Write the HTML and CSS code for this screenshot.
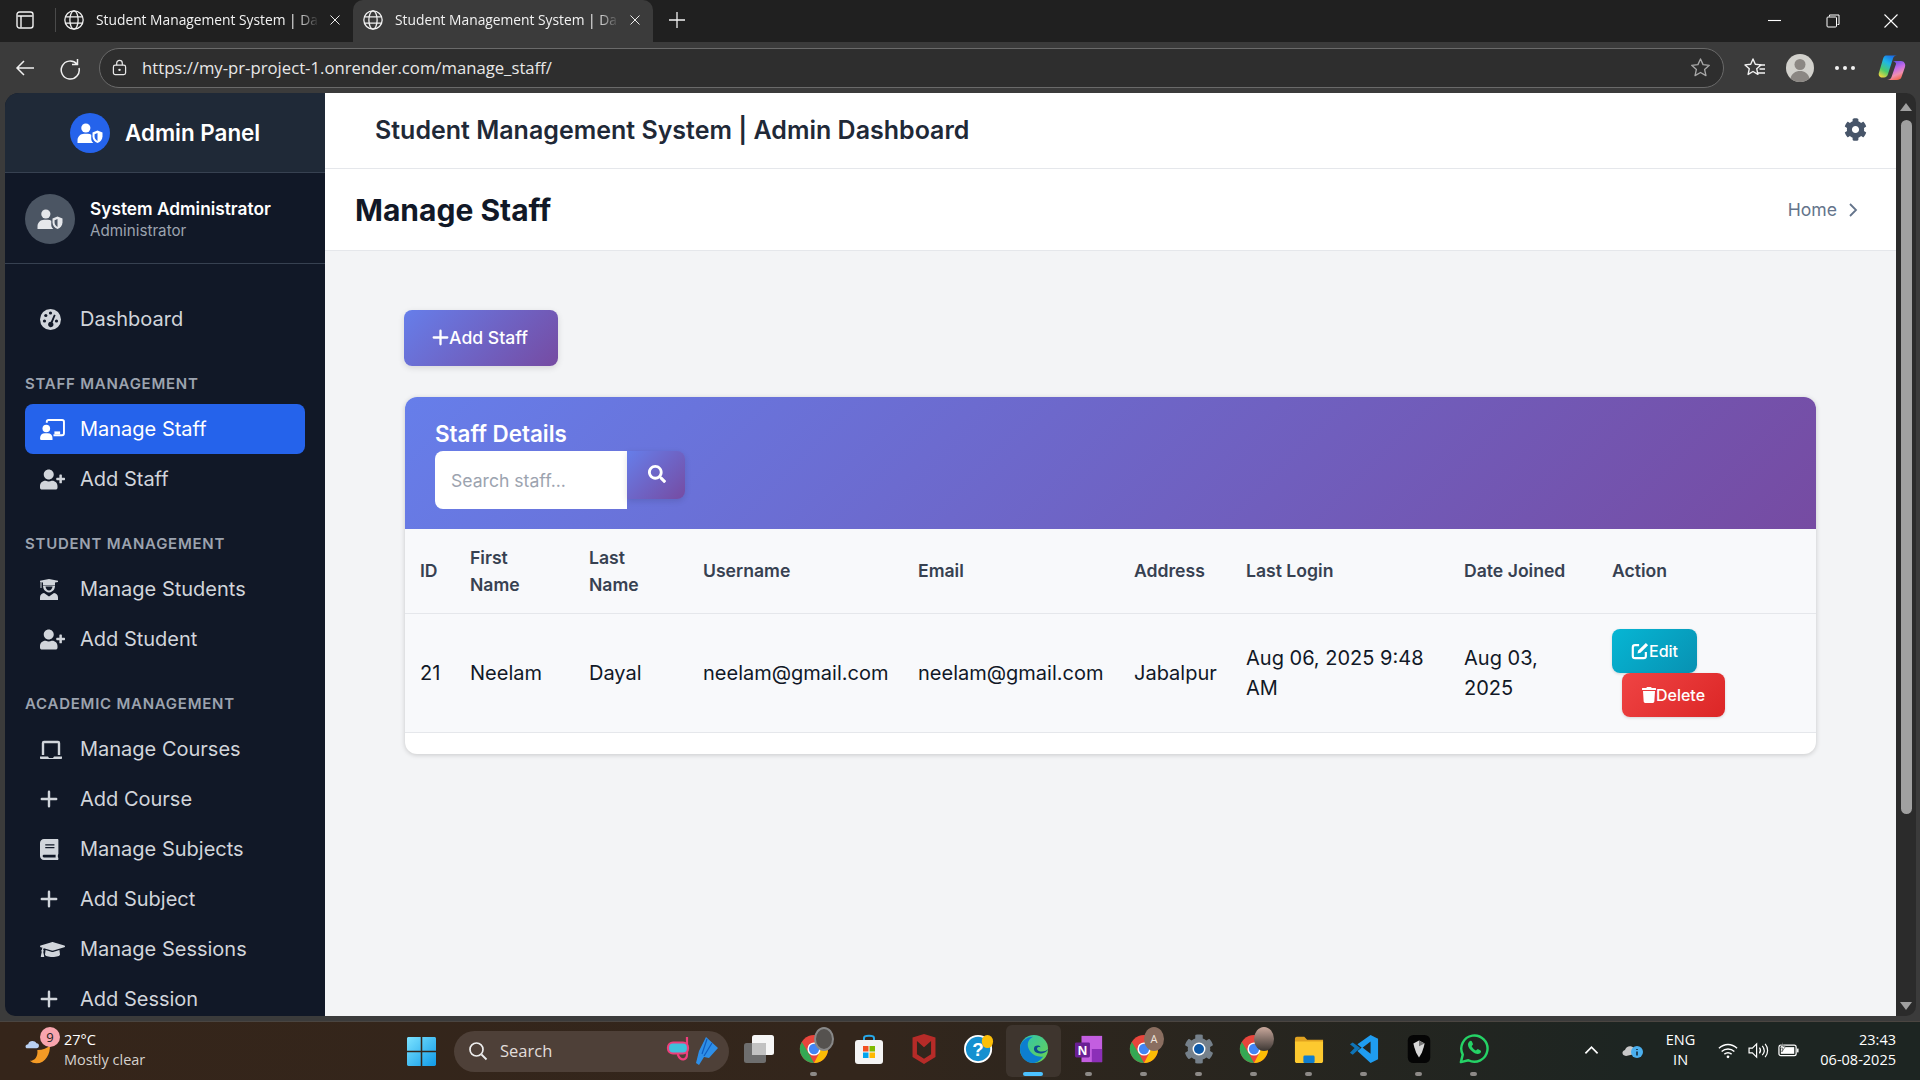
FILE: index.html
```html
<!DOCTYPE html>
<html lang="en">
<head>
	<meta charset="UTF-8">
	<title>Student Management System | Dashboard</title>
	<link rel="stylesheet" href="styles.css">
</head>
<body>
	<svg class="defs" width="0" height="0">
		<defs>
			<symbol id="i-globe" viewBox="0 0 24 24"><g fill="none" stroke="currentColor" stroke-width="1.4"><circle cx="12" cy="12" r="10"/><ellipse cx="12" cy="12" rx="4.5" ry="10"/><path d="M2.5 8.5h19M2.5 15.5h19"/></g></symbol>
			<symbol id="i-x" viewBox="0 0 16 16"><path d="M2 2l12 12M14 2L2 14" fill="none" stroke="currentColor" stroke-width="1.3"/></symbol>
			<symbol id="i-useradd" viewBox="0 0 640 512"><path fill="currentColor" d="M624 208h-64v-64c0-8.8-7.2-16-16-16h-32c-8.8 0-16 7.2-16 16v64h-64c-8.8 0-16 7.2-16 16v32c0 8.8 7.2 16 16 16h64v64c0 8.8 7.2 16 16 16h32c8.8 0 16-7.2 16-16v-64h64c8.8 0 16-7.2 16-16v-32c0-8.8-7.2-16-16-16zm-400 48c70.7 0 128-57.3 128-128S294.7 0 224 0 96 57.3 96 128s57.3 128 128 128zm89.6 32h-16.7c-22.2 10.2-46.9 16-72.9 16s-50.6-5.8-72.9-16h-16.7C60.2 288 0 348.2 0 422.4V464c0 26.5 21.5 48 48 48h352c26.5 0 48-21.5 48-48v-41.6c0-74.2-60.2-134.4-134.4-134.4z"/></symbol>
			<symbol id="i-plus" viewBox="0 0 20 20"><path d="M10 2v16M2 10h16" fill="none" stroke="currentColor" stroke-width="2.7" stroke-linecap="round"/></symbol>
			<symbol id="i-shield" viewBox="0 0 30 24"><circle cx="10" cy="6" r="5.5" fill="currentColor"/><path fill="currentColor" d="M0 24v-3c0-4.500 3.500-8 8-8h4.500c1.500 0 2.800.4 4 1v5c0 2 .8 3.800 2.500 5z"/><path fill="currentColor" d="M24 9l6 2.500v4.500c0 4-2.500 6.800-6 8-3.500-1.200-6-4-6-8v-4.500z"/><path fill="var(--hole)" d="M24 12v9.500c-2.200-1-3.500-3-3.500-5.500v-2.500z"/></symbol>
			<symbol id="i-search" viewBox="0 0 512 512"><path fill="currentColor" d="M505 442.7L405.3 343c-4.5-4.5-10.6-7-17-7H372c27.6-35.3 44-79.7 44-128C416 93.1 322.9 0 208 0S0 93.1 0 208s93.1 208 208 208c48.3 0 92.7-16.4 128-44v16.3c0 6.4 2.5 12.5 7 17l99.7 99.7c9.4 9.4 24.6 9.4 33.9 0l28.3-28.3c9.4-9.4 9.4-24.6.1-34zM208 336c-70.7 0-128-57.2-128-128 0-70.7 57.2-128 128-128 70.7 0 128 57.2 128 128 0 70.7-57.2 128-128 128z"/></symbol>
			<symbol id="i-chrome" viewBox="0 0 32 32"><circle cx="16" cy="16" r="15" fill="#e8453c"/><path fill="#34a853" d="M16 31A15 15 0 0 1 3 8.500L10 20l6 11z"/><path fill="#fbbc05" d="M16 31c8.300 0 15-6.700 15-15 0-2.600-.7-5.200-2-7.500H16l6 11z"/><circle cx="16" cy="16" r="7" fill="#fff"/><circle cx="16" cy="16" r="5.500" fill="#4285f4"/></symbol>
		</defs>
	</svg>

	<div class="tabstrip">
		<svg class="tab-panel-icon" viewBox="0 0 18 18"><rect x="1" y="1" width="16" height="16" rx="2.5" fill="none" stroke="#f2f2f2" stroke-width="1.4"/><path d="M1.500 5h15M5 5v11.500" fill="none" stroke="#f2f2f2" stroke-width="1.4"/></svg>
		<span class="tab-sep"></span>
		<div class="tab">
			<svg class="tab-globe"><use href="#i-globe"/></svg>
			<span class="tab-title">Student Management System | Da</span>
			<svg class="tab-close"><use href="#i-x"/></svg>
		</div>
		<div class="tab tab-active">
			<svg class="tab-globe"><use href="#i-globe"/></svg>
			<span class="tab-title">Student Management System | Da</span>
			<svg class="tab-close"><use href="#i-x"/></svg>
		</div>
		<svg class="tab-new" viewBox="0 0 18 18"><path d="M9 1v16M1 9h16" stroke="#f2f2f2" stroke-width="1.3" fill="none"/></svg>
		<div class="win-controls">
			<svg viewBox="0 0 14 14"><path d="M0 6.500h13" stroke="#fff" stroke-width="1.100"/></svg>
			<svg viewBox="0 0 14 14"><path d="M3.500 2.500V1h9.500v9.500h-1.500" fill="none" stroke="#fff"/><rect x="1" y="3" width="9.500" height="10" rx="1" fill="none" stroke="#fff"/></svg>
			<svg viewBox="0 0 14 14"><path d="M.5.500l13 13M13.500.500l-13 13" stroke="#fff" stroke-width="1.100"/></svg>
		</div>
	</div>

	<div class="toolbar">
		<svg class="tool-icon" viewBox="0 0 24 24"><path d="M21 12H4M11 5l-7 7 7 7" fill="none" stroke="#f0f0f0" stroke-width="1.500"/></svg>
		<svg class="tool-icon" viewBox="0 0 24 24"><path d="M19.500 3v5.500H14M18.900 8A9 9 0 1 0 21 12" fill="none" stroke="#f0f0f0" stroke-width="1.500"/></svg>
		<div class="addressbar">
			<svg class="lock" viewBox="0 0 16 18"><rect x="1.500" y="6.500" width="13" height="10" rx="2" fill="none" stroke="#e8e8e8" stroke-width="1.300"/><path d="M5 6.500V4.500a3 3 0 0 1 6 0v2" fill="none" stroke="#e8e8e8" stroke-width="1.300"/><circle cx="8" cy="11.500" r="1.300" fill="#e8e8e8"/></svg>
			<span class="url">https://my-pr-project-1.onrender.com/manage_staff/</span>
			<svg class="star" viewBox="0 0 22 22"><path d="M11 2l2.700 6 6.500.7-4.900 4.300 1.400 6.500L11 16.200l-5.700 3.300 1.400-6.500L1.800 8.700 8.300 8z" fill="none" stroke="#a8a8a8" stroke-width="1.400" stroke-linejoin="round"/></svg>
		</div>
		<svg class="fav-icon" viewBox="0 0 22 22"><path d="M9 2l2.300 5.300 5.700.6-4.300 3.800 1.200 5.700L9 14.500l-4.900 2.900 1.200-5.700L1 7.900l5.700-.6z" fill="none" stroke="#f2f2f2" stroke-width="1.400" stroke-linejoin="round"/><path d="M15 8h6M15.500 12h5.500M14 16h7" stroke="#f2f2f2" stroke-width="1.300"/></svg>
		<svg class="profile" viewBox="0 0 28 28"><circle cx="14" cy="14" r="14" fill="#d2d1cc"/><circle cx="14" cy="10.500" r="5.500" fill="#8b8783"/><path d="M4.500 24.500c1-5 5-7.500 9.500-7.500s8.500 2.500 9.500 7.500A14 14 0 0 1 14 28a14 14 0 0 1-9.500-3.500z" fill="#8b8783"/></svg>
		<span class="more"><i></i><i></i><i></i></span>
		<svg class="copilot" viewBox="0 0 28 28">
			<defs>
				<linearGradient id="cp1" x1=".7" y1="0" x2=".2" y2="1"><stop offset="0" stop-color="#1a6fe8"/><stop offset=".35" stop-color="#1fb6e6"/><stop offset=".7" stop-color="#4ccb6a"/><stop offset="1" stop-color="#ecd640"/></linearGradient>
				<linearGradient id="cp2" x1=".3" y1="0" x2=".7" y2="1"><stop offset="0" stop-color="#5b4fe6"/><stop offset=".4" stop-color="#c46ae8"/><stop offset=".7" stop-color="#f08fb0"/><stop offset="1" stop-color="#f4603c"/></linearGradient>
			</defs>
			<path fill="url(#cp2)" d="M14 7h9c3 0 5 3 4 6l-3.500 10c-.7 2.200-2.500 3-4.500 3H9c2 0 4-1 4.500-3L18 10c.4-1.500-2-3-4-3z"/>
			<path fill="url(#cp1)" d="M8 1.500h11c-2 0-3.500 1-4 3L10 20c-.5 2-2 3.500-4 3.500H4c-2.500 0-4-2.500-3-5L5 5c.7-2 1.500-3.500 3-3.500z"/>
		</svg>
	</div>

	<div class="viewport">
		<aside class="sidebar">
			<div class="brand">
				<span class="brand-logo"><svg><use href="#i-shield"/></svg></span>
				<span class="brand-name">Admin Panel</span>
			</div>
			<div class="user-box">
				<span class="user-avatar"><svg><use href="#i-shield"/></svg></span>
				<div>
					<div class="user-name">System Administrator</div>
					<div class="user-role">Administrator</div>
				</div>
			</div>
			<nav class="nav">
				<a class="nav-item">
					<svg class="nav-icon" viewBox="0 0 21 21" preserveAspectRatio="xMinYMid meet"><circle cx="10.500" cy="10.500" r="10.500" fill="currentColor"/><g fill="#111827"><circle cx="4.500" cy="12" r="1.600"/><circle cx="5.800" cy="6.500" r="1.600"/><circle cx="10.500" cy="4" r="1.600"/><circle cx="16.500" cy="12" r="1.600"/><path d="M14 5.500l1.600.7-3 7.300a2.700 2.700 0 1 1-1.800-.7z"/></g></svg>
					Dashboard
				</a>
				<div class="nav-label">Staff Management</div>
				<a class="nav-item nav-active">
					<svg class="nav-icon" viewBox="0 0 26 22"><path fill="none" stroke="currentColor" stroke-width="2" d="M7 4V3c0-1 .7-2 2-2h14c1 0 2 1 2 2v12c0 1-1 2-2 2H14"/><path fill="currentColor" d="M15 13h6v3h-6z"/><circle cx="6.500" cy="10" r="4" fill="currentColor"/><path fill="currentColor" d="M0 21v-1c0-3 2-5 5-5h3c3 0 5 2 5 5v2H1c-.5 0-1-.5-1-1z"/></svg>
					Manage Staff
				</a>
				<a class="nav-item"><svg class="nav-icon"><use href="#i-useradd"/></svg>Add Staff</a>
				<div class="nav-label">Student Management</div>
				<a class="nav-item">
					<svg class="nav-icon" viewBox="0 0 18 21" preserveAspectRatio="xMinYMid meet"><path fill="currentColor" d="M9 0l9 1.800v1.200L15 3.500V6H3V3.500L1.500 3.200V9H.5V2.900L0 2.800V1.800z"/><path fill="currentColor" d="M3 6.500h12c0 3-1.500 6.500-6 7-4.500-.5-6-4-6-7z"/><path fill="#111827" d="M5.500 7.500h7c-.3 1.800-1.500 4-3.500 4s-3.200-2.200-3.500-4z"/><path fill="currentColor" d="M0 21v-2.500c0-2.500 1.500-4 4-4.500l5 3.500 5-3.500c2.500.5 4 2 4 4.500V21z"/></svg>
					Manage Students
				</a>
				<a class="nav-item"><svg class="nav-icon"><use href="#i-useradd"/></svg>Add Student</a>
				<div class="nav-label">Academic Management</div>
				<a class="nav-item">
					<svg class="nav-icon" viewBox="0 0 25 21" preserveAspectRatio="xMinYMid meet"><path fill="none" stroke="currentColor" stroke-width="2.400" d="M3 16V4c0-.6.4-1 1-1h14c.6 0 1 .4 1 1v12"/><path fill="currentColor" d="M0 17.500h8l1 1.500h4l1-1.500h8V19c0 .6-.4 1-1 1H1c-.6 0-1-.4-1-1z"/></svg>
					Manage Courses
				</a>
				<a class="nav-item nav-plus"><svg class="nav-icon"><use href="#i-plus"/></svg>Add Course</a>
				<a class="nav-item">
					<svg class="nav-icon" viewBox="0 0 448 512" preserveAspectRatio="xMinYMid meet"><path fill="currentColor" d="M448 360V24c0-13.3-10.7-24-24-24H96C43 0 0 43 0 96v320c0 53 43 96 96 96h328c13.3 0 24-10.7 24-24v-16c0-7.5-3.5-14.3-8.9-18.7-4.2-15.4-4.2-59.3 0-74.7 5.4-4.3 8.9-11.1 8.9-18.6zM128 134c0-3.3 2.7-6 6-6h212c3.3 0 6 2.7 6 6v20c0 3.3-2.7 6-6 6H134c-3.3 0-6-2.7-6-6v-20zm0 64c0-3.3 2.7-6 6-6h212c3.3 0 6 2.7 6 6v20c0 3.3-2.7 6-6 6H134c-3.3 0-6-2.7-6-6v-20zm253.400 250H96c-17.7 0-32-14.3-32-32 0-17.6 14.4-32 32-32h285.400c-1.900 17.100-1.900 46.900 0 64z"/></svg>
					Manage Subjects
				</a>
				<a class="nav-item nav-plus"><svg class="nav-icon"><use href="#i-plus"/></svg>Add Subject</a>
				<a class="nav-item">
					<svg class="nav-icon" viewBox="0 0 640 512"><path fill="currentColor" d="M622.340 153.200L343.400 67.500c-15.200-4.670-31.600-4.670-46.790 0L17.660 153.200c-23.540 7.230-23.540 38.360 0 45.590l48.630 14.940c-10.670 13.190-17.230 29.280-17.880 46.900C38.780 266.150 32 276.110 32 288c0 10.780 5.680 19.850 13.860 25.650L20.330 428.530C18.110 438.520 25.710 448 35.940 448h56.110c10.240 0 17.840-9.480 15.620-19.470L82.140 313.650C90.320 307.850 96 298.780 96 288c0-11.570-6.470-21.250-15.660-26.870.76-15.020 8.440-28.300 20.690-36.720L296.600 284.500c9.060 2.780 26.440 6.250 46.790 0l278.950-85.700c23.550-7.240 23.550-38.360 0-45.600zM352.790 315.090c-28.530 8.760-52.840 3.920-65.590 0l-145.020-44.550L128 384c0 35.350 85.960 64 192 64s192-28.650 192-64l-14.180-113.470-145.030 44.560z"/></svg>
					Manage Sessions
				</a>
				<a class="nav-item nav-plus"><svg class="nav-icon"><use href="#i-plus"/></svg>Add Session</a>
			</nav>
		</aside>

		<main class="main">
			<header class="topbar">
				<h1 class="app-title">Student Management System | Admin Dashboard</h1>
				<svg class="gear" viewBox="0 0 512 512"><path fill="#475569" d="M487.400 315.700l-42.600-24.600c4.300-23.200 4.300-47 0-70.200l42.600-24.600c4.900-2.800 7.100-8.600 5.500-14-11.100-35.600-30-67.800-54.700-94.600-3.800-4.100-10-5.100-14.800-2.300L380.800 110c-17.900-15.400-38.500-27.300-60.800-35.100V25.800c0-5.600-3.900-10.500-9.400-11.700-36.700-8.200-74.300-7.800-109.200 0-5.500 1.200-9.400 6.100-9.400 11.700V75c-22.200 7.900-42.800 19.800-60.800 35.100L88.700 85.500c-4.900-2.800-11-1.900-14.800 2.300-24.700 26.700-43.600 58.900-54.700 94.600-1.700 5.400.6 11.200 5.500 14L67.300 221c-4.300 23.200-4.300 47 0 70.200l-42.600 24.600c-4.900 2.800-7.100 8.600-5.500 14 11.100 35.600 30 67.800 54.700 94.600 3.800 4.100 10 5.100 14.800 2.300l42.600-24.600c17.900 15.400 38.500 27.300 60.800 35.100v49.200c0 5.600 3.900 10.500 9.400 11.700 36.700 8.200 74.300 7.800 109.200 0 5.500-1.200 9.400-6.100 9.400-11.700v-49.200c22.200-7.900 42.800-19.800 60.800-35.100l42.600 24.600c4.900 2.800 11 1.900 14.800-2.300 24.700-26.700 43.600-58.900 54.700-94.600 1.500-5.500-.7-11.300-5.600-14.100zM256 336c-44.100 0-80-35.900-80-80s35.900-80 80-80 80 35.900 80 80-35.900 80-80 80z"/></svg>
			</header>
			<div class="page-head">
				<h2 class="page-title">Manage Staff</h2>
				<div class="crumb">Home <svg viewBox="0 0 10 16"><path d="M2 2l6 6-6 6" fill="none" stroke="#64748b" stroke-width="1.800"/></svg></div>
			</div>
			<section class="content">
				<a class="btn-add"><svg><use href="#i-plus"/></svg>Add Staff</a>
				<div class="card">
					<div class="card-head">
						<h3 class="card-title">Staff Details</h3>
						<div class="search">
							<input class="search-input" type="text" placeholder="Search staff...">
							<button class="search-btn"><svg><use href="#i-search"/></svg></button>
						</div>
					</div>
					<table class="staff-table">
						<colgroup>
							<col class="c-id"><col class="c-first"><col class="c-last"><col class="c-user"><col class="c-email"><col class="c-addr"><col class="c-login"><col class="c-joined"><col>
						</colgroup>
						<thead>
							<tr><th>ID</th><th>First Name</th><th>Last Name</th><th>Username</th><th>Email</th><th>Address</th><th>Last Login</th><th>Date Joined</th><th>Action</th></tr>
						</thead>
						<tbody>
							<tr>
								<td>21</td><td>Neelam</td><td>Dayal</td><td>neelam@gmail.com</td><td>neelam@gmail.com</td><td>Jabalpur</td><td>Aug 06, 2025 9:48 AM</td><td>Aug 03, 2025</td>
								<td>
									<div class="actions">
										<a class="btn-row btn-edit"><svg viewBox="0 0 20 20"><path d="M9 3.500H4.500A2.500 2.500 0 0 0 2 6v9.500A2.500 2.500 0 0 0 4.500 18H14a2.500 2.500 0 0 0 2.500-2.500V11" fill="none" stroke="#fff" stroke-width="2.400"/><path d="M16.500 1l2.500 2.500-8.500 8.500-3.300.8.800-3.300z" fill="#fff"/></svg>Edit</a>
										<a class="btn-row btn-delete"><svg viewBox="0 0 448 512"><path fill="#fff" d="M432 32H312l-9.400-18.700A24 24 0 0 0 281.100 0H166.800a23.720 23.720 0 0 0-21.400 13.300L136 32H16A16 16 0 0 0 0 48v32a16 16 0 0 0 16 16h416a16 16 0 0 0 16-16V48a16 16 0 0 0-16-16zM53.200 467a48 48 0 0 0 47.900 45h245.800a48 48 0 0 0 47.900-45L416 128H32z"/></svg>Delete</a>
									</div>
								</td>
							</tr>
						</tbody>
					</table>
				</div>
			</section>
		</main>

		<div class="scrollbar">
			<span class="sb-up"></span>
			<span class="sb-thumb"></span>
			<span class="sb-down"></span>
		</div>
	</div>

	<footer class="taskbar">
		<div class="weather">
			<svg class="weather-icon" viewBox="0 0 36 40"><path fill="#f39a25" d="M16 20c7 0 12-2 15-6 1 10-5 22-16 22-3 0-6-1-8-3 6 0 10-5 9-13z"/><path fill="#b9d0f2" d="M4 18c-3 0-3-5 1-5 1-5 8-5 10-1 4 0 4 6 0 6z"/></svg>
			<span class="weather-badge">9</span>
			<div>
				<div class="weather-temp">27°C</div>
				<div class="weather-text">Mostly clear</div>
			</div>
		</div>
		<svg class="start" viewBox="0 0 30 30">
			<defs><linearGradient id="win" x1="0" y1="0" x2="1" y2="1"><stop offset="0" stop-color="#7ce3ff"/><stop offset="1" stop-color="#109ae8"/></linearGradient></defs>
			<path fill="url(#win)" d="M0 1.500C0 .7.700 0 1.500 0h12.700v14.200H0zM15.800 0h12.700c.8 0 1.500.7 1.500 1.500v12.700H15.800zM0 15.800h14.200V30H1.500C.7 30 0 29.300 0 28.500zM15.800 15.800H30v12.700c0 .8-.7 1.500-1.500 1.500H15.800z"/>
		</svg>
		<div class="task-search">
			<svg viewBox="0 0 20 20"><circle cx="8.500" cy="8.500" r="6.500" fill="none" stroke="#eee" stroke-width="1.700"/><path d="M13.500 13.500l5 5" stroke="#eee" stroke-width="1.800"/></svg>
			<span class="task-search-text">Search</span>
			<svg class="snorkel" viewBox="0 0 52 28">
				<path d="M21 0v17c0 6-6 8-9 1" fill="none" stroke="#ee3f7c" stroke-width="2.200" stroke-linecap="round"/>
				<rect x="2" y="5.500" width="20" height="11" rx="5" fill="#3fc1dc" stroke="#ee3f7c" stroke-width="2.200"/>
				<path fill="#2e8fe8" d="M40 0l12 11-9 10-5-1-5 8-3-2 3-12z"/>
				<path d="M41 2l-5 15M46 6l-8 13" stroke="#0f5cc0" stroke-width="1.200"/>
			</svg>
		</div>
		<div class="task-icons">
			<span class="task-app"><svg viewBox="0 0 30 28"><rect x="0" y="8" width="22" height="20" rx="2.500" fill="#6e6e6e"/><rect x="8" y="0" width="22" height="20" rx="2.500" fill="#f6f6f6"/><rect x="8" y="8" width="14" height="12" fill="#c2c2c2"/></svg></span>
			<span class="task-app is-open"><svg><use href="#i-chrome"/></svg><i class="task-badge badge-grey"></i></span>
			<span class="task-app"><svg viewBox="0 0 30 30"><path d="M10 8V4c0-3 10-3 10 0v4" fill="none" stroke="#27a8e8" stroke-width="2"/><rect x="1" y="6" width="28" height="24" rx="3" fill="#f4f4f4"/><rect x="9" y="12" width="5.500" height="5.500" fill="#f25022"/><rect x="15.500" y="12" width="5.500" height="5.500" fill="#7fba00"/><rect x="9" y="18.500" width="5.500" height="5.500" fill="#00a4ef"/><rect x="15.500" y="18.500" width="5.500" height="5.500" fill="#ffb900"/></svg></span>
			<span class="task-app"><svg viewBox="0 0 30 34"><path fill="#b62b28" d="M2 4l13-4 13 4v22l-13 8-13-8zM7 8v15l8 5 8-5V8l-8 7z" fill-rule="evenodd"/></svg></span>
			<span class="task-app"><svg viewBox="0 0 32 32"><circle cx="15" cy="16" r="14" fill="#1590d0" stroke="#fff" stroke-width="2"/><text x="15" y="23" class="help-mark">?</text><ellipse cx="25" cy="8" rx="6" ry="7" fill="#fdbf08"/></svg></span>
			<span class="task-app task-current">
				<svg viewBox="0 0 32 32">
					<defs><linearGradient id="edge" x1="0" y1="0" x2="1" y2="1"><stop offset="0" stop-color="#2cc4b4"/><stop offset="1" stop-color="#6bd14d"/></linearGradient></defs>
					<circle cx="16" cy="16" r="15" fill="url(#edge)"/>
					<path fill="#0c7ed0" d="M1 16C1 8 8 3 15 3c-6 3-7 9-4 14s9 8 15 7c-3 4-7 7-11 7C7 31 1 24 1 16z"/>
					<path fill="#0d4b91" d="M31 16c-1 4-8 6-12 4-3-1-4-5-2-7 2-1 5-1 6 1-4-1-5 2-2 4 3 1 7 1 10-2z"/>
				</svg>
			</span>
			<span class="task-app is-open"><svg viewBox="0 0 32 32"><path fill="#c35ee0" d="M8 2h22v28H8z"/><path fill="#8c2fb8" d="M19 16h11v14H19z"/><rect x="1" y="9" width="16" height="16" rx="1.500" fill="#6a1f94"/><text x="9" y="22" class="one-mark">N</text></svg></span>
			<span class="task-app is-open"><svg><use href="#i-chrome"/></svg><i class="task-badge badge-a">A</i></span>
			<span class="task-app is-open"><svg viewBox="0 0 512 512"><path fill="#75808a" d="M487.400 315.700l-42.600-24.600c4.300-23.200 4.300-47 0-70.200l42.600-24.600c4.900-2.800 7.100-8.600 5.500-14-11.100-35.600-30-67.800-54.700-94.600-3.800-4.100-10-5.100-14.800-2.300L380.800 110c-17.900-15.400-38.500-27.300-60.800-35.100V25.800c0-5.600-3.900-10.500-9.400-11.700-36.700-8.200-74.300-7.800-109.200 0-5.500 1.200-9.400 6.100-9.400 11.700V75c-22.200 7.900-42.800 19.800-60.800 35.100L88.700 85.500c-4.900-2.800-11-1.900-14.800 2.300-24.700 26.700-43.600 58.900-54.700 94.600-1.700 5.400.6 11.200 5.500 14L67.300 221c-4.300 23.200-4.300 47 0 70.200l-42.600 24.600c-4.900 2.800-7.100 8.600-5.500 14 11.100 35.600 30 67.800 54.700 94.600 3.800 4.100 10 5.100 14.800 2.300l42.600-24.600c17.900 15.400 38.500 27.300 60.800 35.100v49.200c0 5.600 3.900 10.500 9.400 11.700 36.700 8.200 74.300 7.800 109.200 0 5.500-1.200 9.400-6.100 9.400-11.700v-49.200c22.200-7.900 42.800-19.800 60.800-35.100l42.600 24.600c4.900 2.800 11 1.900 14.800-2.300 24.700-26.700 43.600-58.900 54.700-94.600 1.500-5.500-.7-11.300-5.600-14.100z"/><circle cx="256" cy="256" r="110" fill="#fff"/><circle cx="256" cy="256" r="85" fill="#0f5aa8"/></svg></span>
			<span class="task-app is-open"><svg><use href="#i-chrome"/></svg><i class="task-badge badge-photo"></i></span>
			<span class="task-app is-open"><svg viewBox="0 0 32 30"><path fill="#e0a220" d="M1 4c0-1 1-2 2-2h8l3 3h17v3H1z"/><path fill="#fdc92f" d="M1 7h30v21c0 1-1 2-2 2H3c-1 0-2-1-2-2z"/><rect x="10" y="22" width="12" height="8" rx="1.500" fill="#0f7ed0"/></svg></span>
			<span class="task-app is-open"><svg viewBox="0 0 32 32"><path fill="#0e74b8" d="M1 11l3-2 8 6-8 7-3-2 5-5z"/><path fill="#1f9cf0" d="M23 1l8 4v22l-8 4-14-13 5-4 9 7V8l-9 7-5-4z"/></svg></span>
			<span class="task-app is-open"><svg viewBox="0 0 26 32"><rect x="1" y="1" width="24" height="30" rx="6" fill="#050505"/><path fill="#d8d8d8" d="M7 10l6-3 6 3-1 4-2 6-3 5-3-5-2-6z"/><path fill="#777" d="M13 7l6 3-6 3z"/></svg></span>
			<span class="task-app is-open"><svg viewBox="0 0 32 32"><path d="M2 30l2-8A14 14 0 1 1 10 28z" fill="none" stroke="#25d366" stroke-width="2.600" stroke-linejoin="round"/><path fill="#25d366" d="M11 8c1-1 2.500-1 3 .5l1 2.500-1.500 2c1 2 2.500 3.500 4.500 4.500l2-1.500 3 1.500c1 1 .5 2-.5 3-2 1.500-5 1-8-1.500s-5-5-5-8c0-1 .5-2 1.500-3z"/></svg></span>
		</div>
		<div class="tray">
			<svg class="tray-chevron" viewBox="0 0 16 10"><path d="M1.500 8.500L8 2l6.500 6.500" fill="none" stroke="#fff" stroke-width="1.800"/></svg>
			<svg class="tray-cloud" viewBox="0 0 22 18"><path fill="#c8c8c8" d="M4 15c-4 0-5-5-1-6 1-4 6-5 9-2 4-1 6 2 5 5z"/><circle cx="15" cy="11" r="6" fill="#4bb0ef"/><path d="M15 8v1M15 10.500v4" stroke="#10202e" stroke-width="1.500"/></svg>
			<div class="tray-lang">ENG<br>IN</div>
			<svg class="tray-wifi" viewBox="0 0 22 18"><g fill="none" stroke="#fff" stroke-width="1.500"><path d="M1 6.500c6-5.500 14-5.500 20 0M4 10c4-3.500 10-3.500 14 0M7 13c2.500-2 5.500-2 8 0"/></g><circle cx="11" cy="16" r="1.500" fill="#fff"/></svg>
			<svg class="tray-sound" viewBox="0 0 22 18"><path d="M1 6.500h3.500L9 2v14l-4.500-4.500H1z" fill="none" stroke="#fff" stroke-width="1.300"/><path d="M12 6c1.500 2 1.500 4 0 6M15 4c2.500 3 2.500 7 0 10M18 2c3.500 4 3.500 10 0 14" fill="none" stroke="#fff" stroke-width="1.300"/></svg>
			<svg class="tray-battery" viewBox="0 0 22 16"><rect x="1" y="3" width="18" height="11" rx="2" fill="none" stroke="#fff" stroke-width="1.300"/><rect x="3" y="5" width="14" height="7" fill="#fff"/><rect x="20" y="6.500" width="1.500" height="4" fill="#fff"/><path d="M5 0L2 6h3L4 10l4-6H5z" fill="#fff" stroke="#1f2523" stroke-width=".6"/></svg>
			<div class="tray-clock">23:43<br>06-08-2025</div>
		</div>
	</footer>
</body>
</html>
```

FILE: styles.css
```css
*{box-sizing:border-box;}
html,body{margin:0;padding:0;height:100%;}
body{
	width:1920px;
	height:1080px;
	overflow:hidden;
	display:flex;
	flex-direction:column;
	font-family:Inter,"Liberation Sans",sans-serif;
	background:#3b3b3b;
}
h1,h2,h3{margin:0;}
.defs{position:absolute;}

/* browser chrome */
.tabstrip{
	height:42px;
	flex:none;
	display:flex;
	align-items:center;
	background:#202020;
	color:#f2f2f2;
	font-family:"Open Sans","Liberation Sans",sans-serif;
}
.tab-panel-icon{width:18px;height:18px;margin:0 0 3px 16px;}
.tab-sep{width:1px;height:24px;background:#4a4a4a;margin:0 0 3px 21px;}
.tab{
	width:295px;
	height:42px;
	display:flex;
	align-items:center;
	padding:0 0 3px 7px;
	font-size:13.8px;
	margin-right:2px;
}
.tab-active{
	width:300px;
	background:#3b3b3b;
	border-radius:10px 10px 0 0;
	padding-left:9px;
}
.tab-globe{width:22px;height:22px;flex:none;margin-right:11px;}
.tab-title{
	flex:1;
	white-space:nowrap;
	-webkit-mask-image:linear-gradient(to right,#000 90%,transparent 100%);
	mask-image:linear-gradient(to right,#000 90%,transparent 100%);
}
.tab-close{width:12px;height:12px;flex:none;margin:0 10px 0 10px;}
.tab-active .tab-close{margin-right:12px;}
.tab-new{width:18px;height:18px;margin:0 0 3px 13px;}
.win-controls{
	margin-left:auto;
	display:flex;
	gap:44px;
	padding-right:22px;
}
.win-controls svg{width:14px;height:14px;}

.toolbar{
	height:51px;
	flex:none;
	display:flex;
	align-items:center;
	background:#3b3b3b;
}
.tool-icon{width:24px;height:24px;margin-left:13px;}
.tool-icon + .tool-icon{margin-left:21px;}
.addressbar{
	width:1625px;
	height:40px;
	margin-left:17px;
	display:flex;
	align-items:center;
	background:#2e2e2e;
	border:1.5px solid #6a6a6a;
	border-radius:20px;
	padding:0 12px 0 12px;
	color:#e8e8e8;
}
.lock{width:15px;height:17px;flex:none;}
.url{
	font-family:"Open Sans","Liberation Sans",sans-serif;
	font-size:16.7px;
	margin-left:15px;
}
.star{width:21px;height:21px;margin-left:auto;}
.fav-icon{width:22px;height:22px;margin-left:20px;}
.profile{width:28px;height:28px;margin-left:20px;}
.more{display:flex;gap:4px;margin-left:21px;}
.more i{width:4px;height:4px;border-radius:50%;background:#f2f2f2;}
.copilot{width:28px;height:28px;margin-left:23px;}

/* page */
.viewport{
	flex:1;
	min-height:0;
	display:flex;
	padding:0 4px 5px 5px;
}
.sidebar{
	width:320px;
	flex:none;
	background:#111827;
	border-radius:14px 0 0 10px;
	overflow:hidden;
	color:#d1d5db;
}
.brand{
	height:80px;
	display:flex;
	align-items:center;
	padding-left:65px;
	background:#1f2937;
	border-bottom:1px solid #374151;
}
.brand-logo{
	width:40px;
	height:40px;
	border-radius:50%;
	background:#2563eb;
	color:#fff;
	--hole:#2563eb;
	display:flex;
	align-items:center;
	justify-content:center;
}
.brand-logo svg{width:26px;height:20px;}
.brand-name{
	font-size:22.4px;
	font-weight:600;
	color:#fff;
	margin-left:15px;
}
.user-box{
	height:91px;
	display:flex;
	align-items:center;
	padding:2px 0 0 20px;
	border-bottom:1px solid #374151;
}
.user-avatar{
	width:50px;
	height:50px;
	border-radius:50%;
	background:#4b5563;
	color:#e5e7eb;
	--hole:#4b5563;
	display:flex;
	align-items:center;
	justify-content:center;
	margin-right:15px;
}
.user-avatar svg{width:26px;height:20px;}
.user-name{font-size:17.3px;font-weight:600;color:#fff;line-height:24px;}
.user-role{font-size:15.2px;color:#9ca3af;line-height:20px;}
.nav{padding:30px 20px 0;}
.nav-label{
	height:60px;
	padding-top:31px;
	font-size:15px;
	line-height:18px;
	font-weight:600;
	letter-spacing:.75px;
	color:#9ca3af;
	text-transform:uppercase;
}
.nav-item{
	height:50px;
	display:flex;
	align-items:center;
	padding-left:15px;
	border-radius:8px;
	font-size:20px;
	color:#d1d5db;
}
.nav-active{background:#2563eb;color:#fff;}
.nav-icon{width:25px;height:21px;flex:none;margin-right:15px;}
.nav-plus .nav-icon{width:18px;height:18px;margin-right:22px;}

.main{
	flex:1;
	min-width:0;
	display:flex;
	flex-direction:column;
	background:#f3f4f6;
}
.topbar{
	height:76px;
	flex:none;
	display:flex;
	align-items:center;
	justify-content:space-between;
	background:#fff;
	border-bottom:1px solid #e5e7eb;
	padding:0 29px 2px 50px;
}
.app-title{font-size:25px;font-weight:600;color:#1f2937;}
.gear{width:23px;height:23px;}
.page-head{
	height:82px;
	flex:none;
	display:flex;
	align-items:center;
	justify-content:space-between;
	background:#fff;
	border-bottom:1px solid #e5e7eb;
	padding:0 38px 0 30px;
}
.page-title{font-size:30px;font-weight:700;color:#111827;}
.crumb{
	display:flex;
	align-items:center;
	gap:11px;
	font-size:17.6px;
	color:#64748b;
}
.crumb svg{width:10px;height:16px;}
.content{
	flex:1;
	padding:59px 80px 0;
}
.btn-add{
	width:154px;
	height:56px;
	margin-left:-1px;
	padding:0 2px 1px 0;
	display:flex;
	align-items:center;
	justify-content:center;
	background:linear-gradient(135deg,#667eea,#764ba2);
	border-radius:8px;
	box-shadow:0 2px 6px rgba(0,0,0,.12);
	color:#fff;
	font-size:17.6px;
	font-weight:500;
}
.btn-add svg{width:17px;height:17px;}
.card{
	margin-top:31px;
	background:#fff;
	border-radius:12px;
	box-shadow:0 1px 5px rgba(0,0,0,.18);
	overflow:hidden;
	padding-bottom:21px;
}
.card-head{
	height:132px;
	padding:22px 30px 0;
	background:linear-gradient(135deg,#667eea,#764ba2);
}
.card-title{font-size:22.4px;font-weight:600;color:#fff;line-height:30px;}
.search{display:flex;align-items:flex-start;margin-top:2px;}
.search-input{
	width:192px;
	height:58px;
	border:none;
	outline:none;
	border-radius:8px 0 0 8px;
	padding:0 16px;
	font:17.6px Inter,"Liberation Sans",sans-serif;
	background:#fff;
}
.search-input::placeholder{color:#9ca3af;}
.search-btn{
	width:58px;
	height:48px;
	border:none;
	border-radius:0 8px 8px 0;
	background:linear-gradient(135deg,#667eea,#764ba2);
	box-shadow:0 2px 6px rgba(0,0,0,.12);
	color:#fff;
	padding:0 0 0 1px;
}
.search-btn svg{width:18px;height:18px;}
.staff-table{
	width:100%;
	table-layout:fixed;
	border-collapse:collapse;
	background:#f8f9fb;
}
.c-id{width:50px;}
.c-first{width:119px;}
.c-last{width:114px;}
.c-user{width:215px;}
.c-email{width:216px;}
.c-addr{width:112px;}
.c-login{width:218px;}
.c-joined{width:148px;}
.staff-table th{
	height:84px;
	padding:0 15px;
	text-align:left;
	font-size:17.6px;
	line-height:27px;
	font-weight:600;
	color:#374151;
	border-bottom:1px solid #e5e7eb;
}
.staff-table td{
	height:119px;
	padding:0 15px;
	font-size:20px;
	line-height:30px;
	color:#111827;
	border-bottom:1px solid #e5e7eb;
}
.actions{display:flex;flex-direction:column;align-items:flex-start;}
.btn-row{
	display:flex;
	align-items:center;
	justify-content:center;
	border-radius:8px;
	color:#fff;
	font-size:16px;
	font-weight:500;
	box-shadow:0 1px 3px rgba(0,0,0,.15);
}
.btn-row svg{width:18px;height:18px;}
.btn-edit{width:85px;height:44px;background:linear-gradient(135deg,#06b6d4,#0891b2);}
.btn-delete{width:103px;height:44px;margin-left:10px;background:linear-gradient(135deg,#ef4444,#dc2626);}
.btn-delete svg{width:14px;height:16px;}

.scrollbar{
	width:20px;
	flex:none;
	background:#2b2b2b;
	border-radius:0 10px 10px 0;
	display:flex;
	flex-direction:column;
	align-items:center;
	padding-top:10px;
}
.sb-up,.sb-down{
	width:0;
	height:0;
	border-left:6px solid transparent;
	border-right:6px solid transparent;
}
.sb-up{border-bottom:8px solid #a0a0a0;}
.sb-down{border-top:8px solid #a0a0a0;margin-top:auto;margin-bottom:6px;}
.sb-thumb{
	width:11px;
	height:694px;
	margin-top:9px;
	background:#a0a0a0;
	border-radius:6px;
}

/* taskbar */
.taskbar{
	height:59px;
	flex:none;
	display:flex;
	align-items:center;
	background:linear-gradient(to right,#35251a 0%,#33261c 45%,#1d2522 85%,#1d2522 100%);
	border-top:1px solid #4a4541;
	color:#fff;
	font-family:"Open Sans","Liberation Sans",sans-serif;
}
.weather{
	width:407px;
	flex:none;
	position:relative;
	display:flex;
	align-items:center;
	padding:0 0 2px 24px;
	font-size:14.5px;
	line-height:20px;
}
.weather-icon{width:30px;height:36px;margin-right:10px;}
.weather-badge{
	position:absolute;
	left:40px;
	top:-3px;
	width:20px;
	height:20px;
	border-radius:50%;
	background:#f8a5ae;
	color:#222;
	font-size:13px;
	line-height:20px;
	text-align:center;
}
.weather-text{color:#d6d2ce;}
.start{width:29px;height:29px;flex:none;}
.task-search{
	width:275px;
	height:41px;
	flex:none;
	display:flex;
	align-items:center;
	margin-left:18px;
	padding:0 11px 0 14px;
	border-radius:21px;
	background:#4e4038;
	color:#e2dedb;
	font-size:16.5px;
}
.task-search svg{width:20px;height:20px;flex:none;}
.task-search-text{margin:0 0 2px 12px;}
.task-search .snorkel{width:52px;height:28px;margin-left:auto;}
.task-icons{display:flex;margin-left:2px;}
.task-app{
	width:55px;
	height:52px;
	position:relative;
	display:flex;
	align-items:center;
	justify-content:center;
	border-radius:6px;
	padding-bottom:4px;
}
.task-app svg{width:30px;height:30px;}
.is-open::after{
	content:"";
	position:absolute;
	left:24px;
	bottom:1px;
	width:7px;
	height:4px;
	border-radius:2px;
	background:#8d8a87;
}
.task-current{background:#3e352e;}
.task-current::after{
	content:"";
	position:absolute;
	left:17px;
	bottom:1px;
	width:20px;
	height:4px;
	border-radius:2px;
	background:#4cc2ff;
}
.task-badge{
	position:absolute;
	right:7px;
	top:2px;
	width:20px;
	height:24px;
	border-radius:50%;
	font:11px/24px "Open Sans",sans-serif;
	text-align:center;
	color:#f0e6df;
}
.badge-grey{background:#55524f;border:2px solid #888;}
.badge-a{background:#8a6e60;}
.badge-photo{background:linear-gradient(#c9a89c,#3b3633);}
.help-mark{font:700 20px "Liberation Sans",sans-serif;fill:#fff;text-anchor:middle;}
.one-mark{font:700 14px "Liberation Sans",sans-serif;fill:#fff;text-anchor:middle;}
.tray{
	margin-left:auto;
	display:flex;
	align-items:center;
	padding:0 24px 2px 0;
	font-size:14.5px;
	line-height:20px;
}
.tray svg{flex:none;}
.tray-chevron{width:15px;height:10px;margin-right:23px;}
.tray-cloud{width:22px;height:18px;margin-right:22px;}
.tray-lang{text-align:center;margin-right:23px;}
.tray-wifi{width:20px;height:17px;margin-right:10px;}
.tray-sound{width:21px;height:17px;margin-right:9px;}
.tray-battery{width:21px;height:16px;margin-right:21px;}
.tray-clock{text-align:right;}
```
